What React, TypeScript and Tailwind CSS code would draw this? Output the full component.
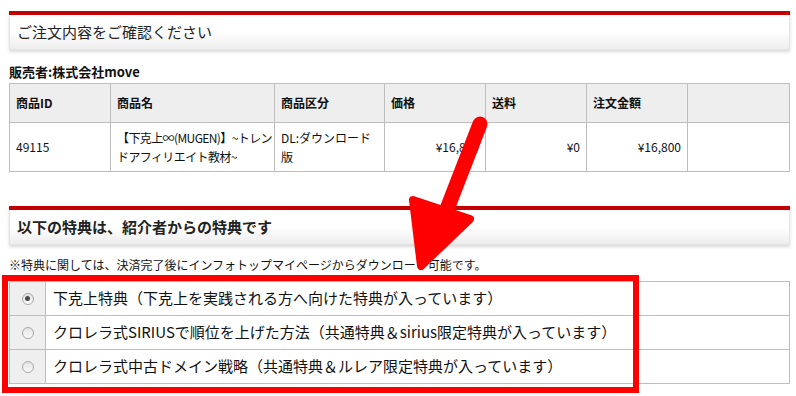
import React from "react";

const font = { fontFamily: '"Noto Sans CJK JP", "Noto Sans", sans-serif' };

const heads = ["商品ID", "商品名", "商品区分", "価格", "送料", "注文金額", ""];
const widths = ["w-[101px]", "w-[164px]", "w-[110px]", "w-[101px]", "w-[101px]", "w-[101px]", ""];

const perks = [
  { label: "下克上特典（下克上を実践される方へ向けた特典が入っています）", checked: true },
  { label: "クロレラ式SIRIUSで順位を上げた方法（共通特典＆sirius限定特典が入っています）", checked: false },
  { label: "クロレラ式中古ドメイン戦略（共通特典＆ルレア限定特典が入っています）", checked: false },
];

const SectionHead = ({ title, bold }: { title: string; bold?: boolean }) => (
  <div className="border-t-4 border-[#c40000] shadow-[0_2px_3px_rgba(0,0,0,0.15)]">
    <div className="h-[35px] flex items-center pl-[7px] border-x border-b border-[#e4e4e4] bg-gradient-to-b from-white via-white to-[#ededed]">
      <span className={`text-[15px] text-[#222] ${bold ? "font-semibold" : ""}`}>{title}</span>
    </div>
  </div>
);

const Radio = ({ checked }: { checked: boolean }) => (
  <span className="w-[12px] h-[12px] rounded-full border border-[#a8a8a8] bg-gradient-to-b from-[#e2e2e2] to-[#fbfbfb] flex items-center justify-center">
    {checked && <span className="w-[5px] h-[5px] rounded-full bg-[#4a4a4a]" />}
  </span>
);

export default function App() {
  return (
    <div className="relative w-[796px] h-[396px] bg-white overflow-hidden text-[#111]" style={font}>
      <div className="pl-[9px] pr-[6px] pt-[11px]">
        <SectionHead title="ご注文内容をご確認ください" />

        <p className="mt-[14px] text-[13px] font-bold leading-[16px]">販売者:株式会社move</p>

        <table className="mt-[3px] w-full table-fixed border-collapse text-[12px]">
          <thead>
            <tr className="h-[39px] bg-[#eeeeee]">
              {heads.map((h, i) => (
                <th key={i} className={`${widths[i]} border border-[#bdbdbd] text-left font-bold px-[6px]`}>
                  {h}
                </th>
              ))}
            </tr>
          </thead>
          <tbody>
            <tr className="h-[49px]">
              <td className="border border-[#bdbdbd] px-[6px]">49115</td>
              <td className="border border-[#bdbdbd] pl-[6px] pr-[2px] leading-[19px] tracking-[-0.6px]">
                【下克上∞(MUGEN)】~トレンドアフィリエイト教材~
              </td>
              <td className="border border-[#bdbdbd] px-[6px] leading-[19px]">DL:ダウンロード版</td>
              <td className="border border-[#bdbdbd] px-[6px] text-right">¥16,800</td>
              <td className="border border-[#bdbdbd] px-[6px] text-right">¥0</td>
              <td className="border border-[#bdbdbd] px-[6px] text-right">¥16,800</td>
              <td className="border border-[#bdbdbd]" />
            </tr>
          </tbody>
        </table>

        <div className="mt-[34px]">
          <SectionHead title="以下の特典は、紹介者からの特典です" bold />
        </div>

        <p className="mt-[12px] text-[12px] leading-[16px]">
          ※特典に関しては、決済完了後にインフォトップマイページからダウンロード可能です。
        </p>

        <table className="mt-[8px] w-full table-fixed border-collapse text-[15px]">
          <tbody>
            {perks.map((p, i) => (
              <tr key={i} className="h-[34px]">
                <td className="w-[36px] border border-[#bdbdbd] bg-[#efefef]">
                  <div className="flex justify-center">
                    <Radio checked={p.checked} />
                  </div>
                </td>
                <td className="border border-[#bdbdbd] pl-[7px] whitespace-nowrap">{p.label}</td>
              </tr>
            ))}
          </tbody>
        </table>
      </div>

      {/* red highlight box */}
      <div className="absolute left-[2px] top-[275px] w-[637px] h-[118px] border-[6px] border-[#ff0000]" />

      {/* red arrow */}
      <svg className="absolute left-0 top-0" width="796" height="396" viewBox="0 0 796 396">
        <line x1="480" y1="124" x2="442" y2="222" stroke="#ff0000" strokeWidth="15" strokeLinecap="round" />
        <polygon
          points="413,200 470,219 421,266"
          fill="#ff0000"
          stroke="#ff0000"
          strokeWidth="8"
          strokeLinejoin="round"
        />
      </svg>
    </div>
  );
}
